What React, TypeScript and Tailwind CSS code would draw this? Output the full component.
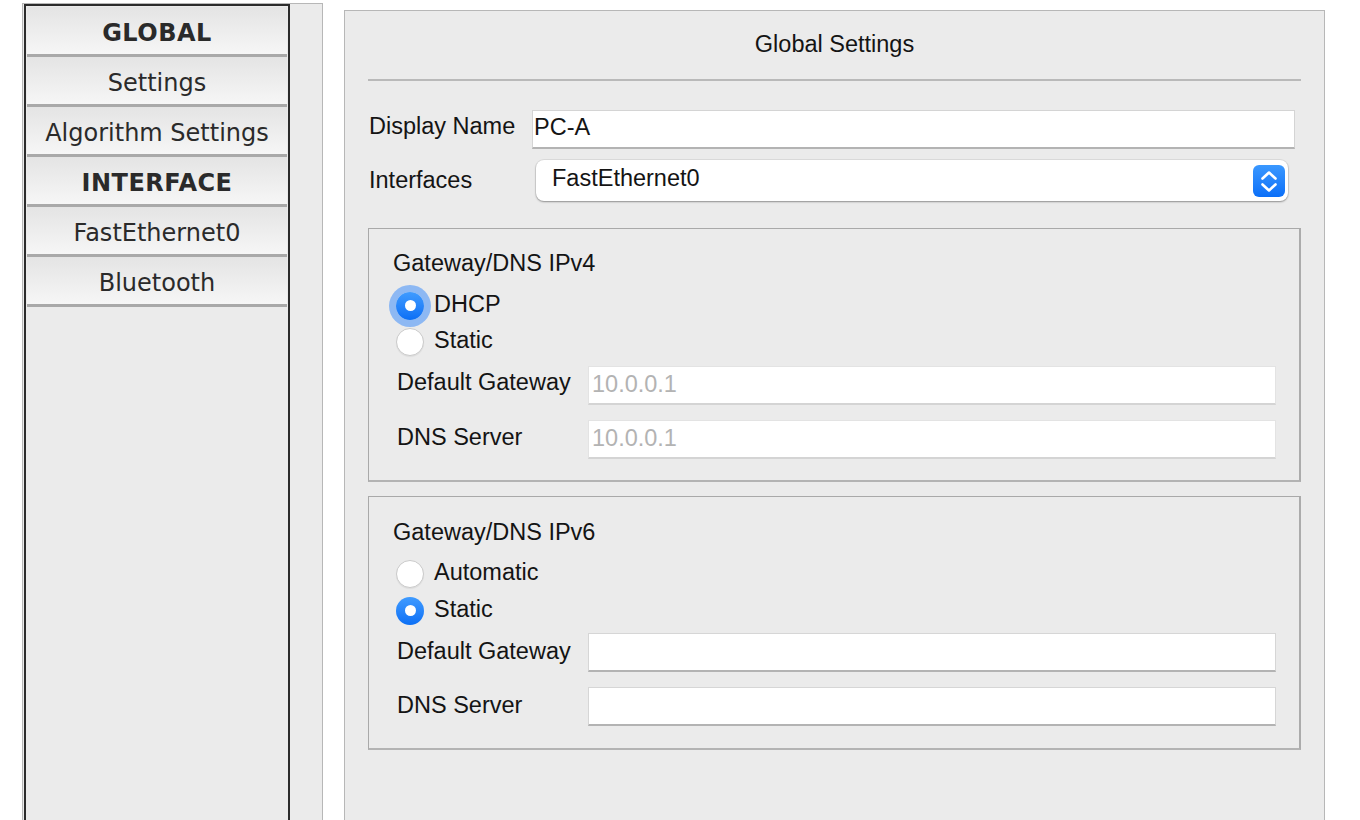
import React from 'react';

const navItems = [
  { label: 'GLOBAL', header: true },
  { label: 'Settings' },
  { label: 'Algorithm Settings' },
  { label: 'INTERFACE', header: true },
  { label: 'FastEthernet0' },
  { label: 'Bluetooth' },
];

const Radio: React.FC<{ checked?: boolean; focused?: boolean }> = ({ checked, focused }) => (
  <span
    className={`flex items-center justify-center w-[28px] h-[28px] rounded-full ${
      checked
        ? 'bg-linear-to-b from-[#3f9bff] to-[#0a6ff5]'
        : 'bg-white border border-[#cacaca] shadow-[0_1px_1px_rgba(0,0,0,0.06)]'
    } ${focused ? 'shadow-[0_0_0_7px_#8db8f3]' : ''}`}
  >
    {checked && <span className="w-[11px] h-[11px] rounded-full bg-white" />}
  </span>
);

const RadioRow: React.FC<{ label: string; checked?: boolean; focused?: boolean; className?: string }> = ({
  label,
  checked,
  focused,
  className = '',
}) => (
  <div className={`flex items-center h-[28px] pl-[27px] ${className}`}>
    <div className="pt-[5px]">
      <Radio checked={checked} focused={focused} />
    </div>
    <span className="ml-[10px] pt-[1px] leading-[28px]">{label}</span>
  </div>
);

const Field: React.FC<{ value?: string; disabled?: boolean }> = ({ value, disabled }) => (
  <div
    className={`flex-1 h-[39px] bg-white pl-[3px] pt-[3px] leading-[28px] ${
      disabled
        ? 'border border-[#e3e3e3] border-b-2 border-b-[#d4d4d4] text-[#b3b3b3]'
        : 'border border-[#d6d6d6] border-b-2 border-b-[#b3b3b3]'
    }`}
  >
    {value}
  </div>
);

const FieldRow: React.FC<{ label: string; value?: string; disabled?: boolean; className?: string; labelOffset?: string }> = ({
  label,
  value,
  disabled,
  className = '',
  labelOffset = 'mt-[2px]',
}) => (
  <div className={`flex items-start h-[39px] pl-[28px] pr-[23px] ${className}`}>
    <span className={`w-[191px] leading-[28px] ${labelOffset}`}>{label}</span>
    <Field value={value} disabled={disabled} />
  </div>
);

const GroupBox: React.FC<{ className?: string; children: React.ReactNode }> = ({ className = '', children }) => (
  <div
    className={`h-[254px] border border-[#a9a9a9] border-r-2 border-b-2 border-r-[#ababab] border-b-[#b3b3b3] ${className}`}
  >
    {children}
  </div>
);

const App: React.FC = () => {
  return (
    <div className="h-[820px] overflow-hidden bg-white flex items-stretch">
      {/* left nav */}
      <div className="ml-[22px] mt-[3px] w-[301px] border border-[#b7b7b7] border-b-0 bg-[#ebebeb] font-['DejaVu_Sans',Verdana,sans-serif] text-[24px] text-[#2a2a2a]">
        <div className="ml-[1px] w-[266px] h-full border-2 border-b-0 border-[#2b2b2b] pt-[1px] px-[1px]">
          {navItems.map((item) => (
            <div
              key={item.label}
              className={`h-[50px] border-b-[3px] border-[#a9a9a9] bg-linear-to-b from-[#e4e4e4] to-[#f6f6f6] flex items-center justify-center pt-[5px] leading-[28px] ${
                item.header ? 'font-bold tracking-[0.5px]' : ''
              }`}
            >
              {item.label}
            </div>
          ))}
        </div>
      </div>

      {/* main panel */}
      <div className="ml-[21px] mt-[10px] w-[981px] border border-[#b7b7b7] border-b-0 bg-[#ebebeb] px-[23px] font-['Liberation_Sans',Arial,sans-serif] text-[23.5px] text-[#141414]">
        <div className="pt-[19px] h-[46px] leading-[28px] text-center">Global Settings</div>
        <div className="mt-[22px] h-[2px] bg-[#b9b9b9]" />

        <div className="mt-[29px] flex items-start h-[39px] pr-[6px]">
          <span className="w-[164px] pl-[1px] mt-[2px] leading-[28px]">Display Name</span>
          <div className="flex-1 h-[39px] bg-white border border-[#d4d4d4] border-b-2 border-b-[#b3b3b3] pl-[1px] pt-[2px] leading-[28px]">
            PC-A
          </div>
        </div>

        <div className="mt-[11px] flex items-start h-[41px] pr-[13px]">
          <span className="w-[168px] pl-[1px] mt-[6px] leading-[28px]">Interfaces</span>
          <div className="flex-1 h-[41px] bg-white rounded-[8px] shadow-[0_0_0_1px_rgba(0,0,0,0.06),0_1px_2px_rgba(0,0,0,0.35)] flex items-start justify-between">
            <span className="pl-[16px] pt-[4px] leading-[28px]">FastEthernet0</span>
            <span className="mt-[5px] mr-[3px] w-[32px] h-[32px] rounded-[6px] bg-linear-to-b from-[#3a98ff] to-[#0a6ff8] flex items-center justify-center">
              <svg width="32" height="32" viewBox="0 0 32 32" fill="none">
                <path d="M9.5 13.5 L16 7.5 L22.5 13.5" stroke="white" strokeWidth="2.6" strokeLinecap="round" strokeLinejoin="round" />
                <path d="M9.5 19.5 L16 25.5 L22.5 19.5" stroke="white" strokeWidth="2.6" strokeLinecap="round" strokeLinejoin="round" />
              </svg>
            </span>
          </div>
        </div>

        <GroupBox className="mt-[27px]">
          <div className="pt-[20px] pl-[24px] h-[47px] leading-[28px]">Gateway/DNS IPv4</div>
          <RadioRow className="mt-[13px]" label="DHCP" checked focused />
          <RadioRow className="mt-[8px]" label="Static" />
          <FieldRow className="mt-[13px]" label="Default Gateway" value="10.0.0.1" disabled labelOffset="mt-[2px]" />
          <FieldRow className="mt-[15px]" label="DNS Server" value="10.0.0.1" disabled labelOffset="mt-[3px]" />
        </GroupBox>

        <GroupBox className="mt-[14px]">
          <div className="pt-[21px] pl-[24px] h-[48px] leading-[28px]">Gateway/DNS IPv6</div>
          <RadioRow className="mt-[12px]" label="Automatic" />
          <RadioRow className="mt-[9px]" label="Static" checked />
          <FieldRow className="mt-[11px]" label="Default Gateway" labelOffset="mt-[4px]" />
          <FieldRow className="mt-[15px]" label="DNS Server" labelOffset="mt-[4px]" />
        </GroupBox>
      </div>
    </div>
  );
};

export default App;
